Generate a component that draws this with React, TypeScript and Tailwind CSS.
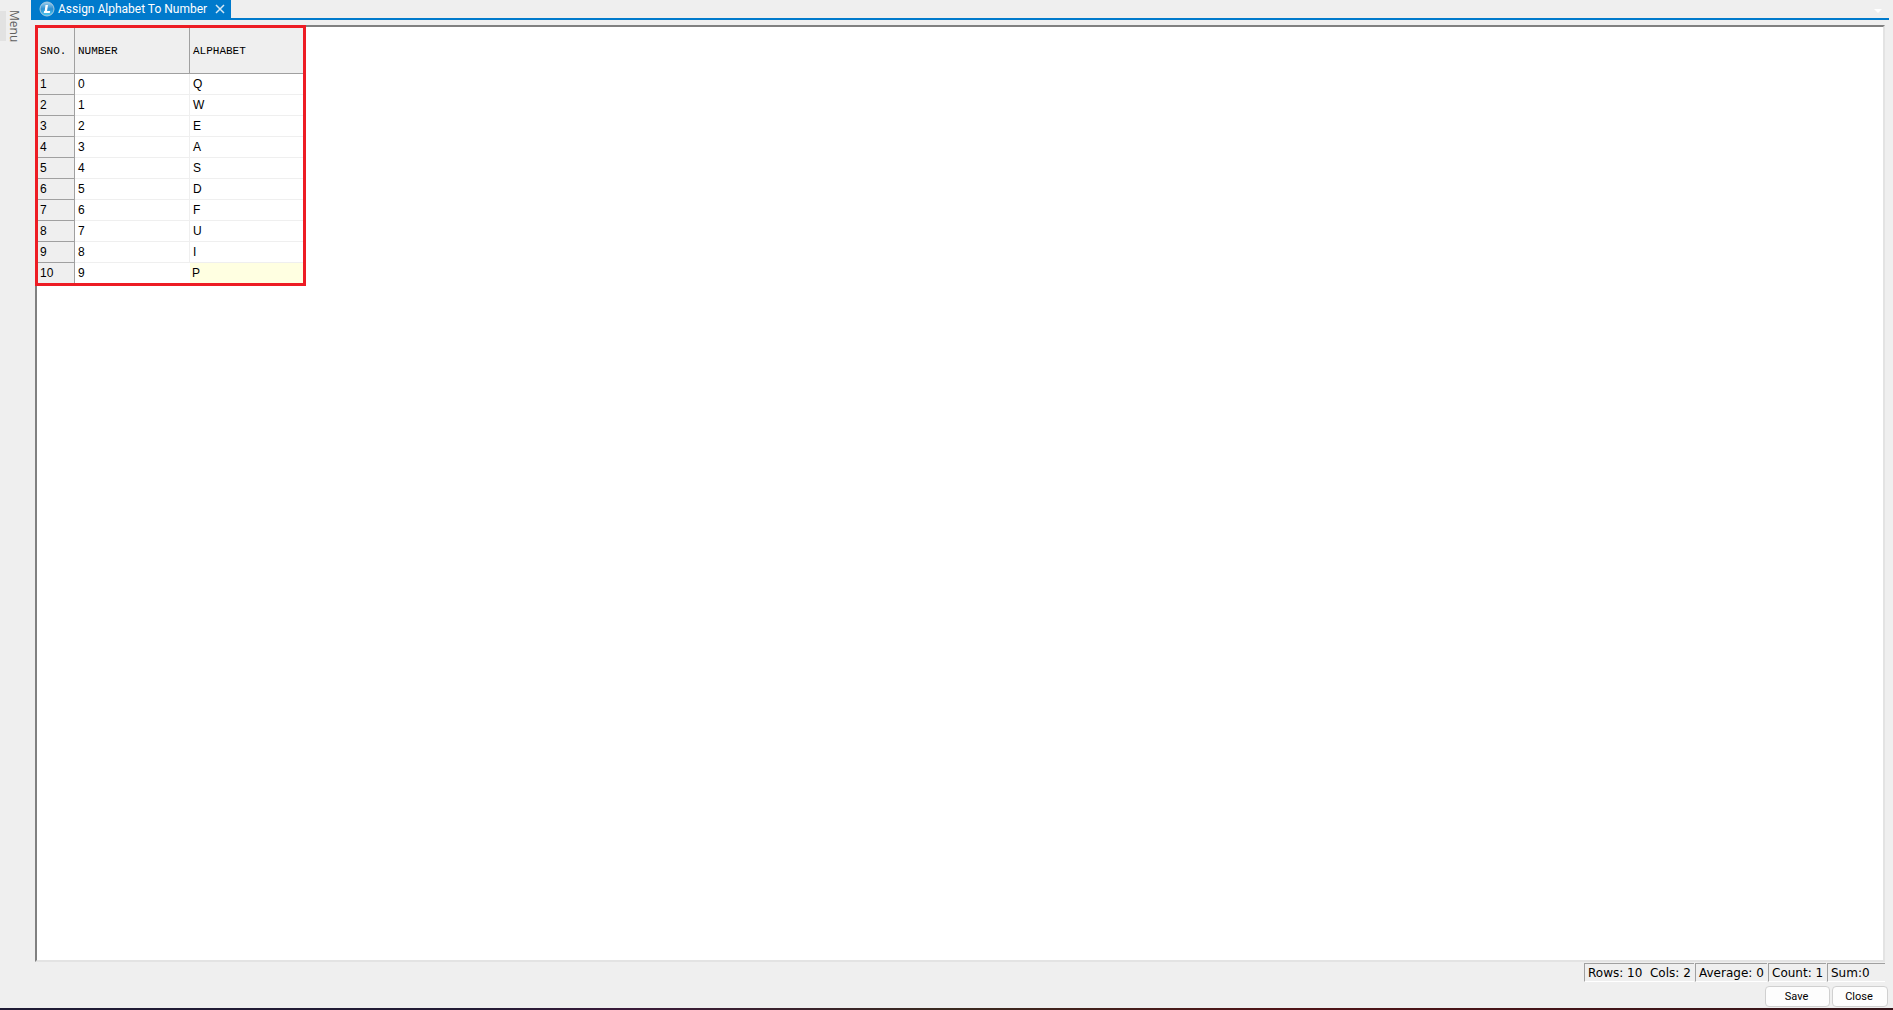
import React from "react";

const rows = ["Q", "W", "E", "A", "S", "D", "F", "U", "I", "P"];

const statusCell =
  "h-[19px] border-l border-t border-b border-l-[#a0a0a0] border-t-[#a0a0a0] border-b-white pl-[3px] leading-[19px] whitespace-pre";

function Logo() {
  return (
    <svg width="16" height="16" viewBox="0 0 16 16" aria-hidden="true">
      <defs>
        <linearGradient id="ball" x1="0" y1="0" x2="0" y2="1">
          <stop offset="0" stopColor="#9fd0ee" />
          <stop offset="0.5" stopColor="#2a8fd2" />
          <stop offset="1" stopColor="#4fd0f5" />
        </linearGradient>
      </defs>
      <circle cx="8" cy="8" r="7" fill="url(#ball)" stroke="#a9c9de" strokeWidth="1" />
      <path d="M6.500 4H9L8 10h3.200l-.4 2H4.800l.3-2h.6z" fill="#fff" />
    </svg>
  );
}

export default function App() {
  return (
    <div className="flex h-screen flex-col bg-[#efefef] font-[Roboto,sans-serif] text-black">
      <div className="flex min-h-0 flex-1">
        <aside className="w-[31px] shrink-0 pt-[11px]">
          <button className="flex h-[30px] items-center text-[12px] leading-[16px] text-[#606060]">
            <span className="h-full w-1.5 bg-[#e2e2e2]" />
            <span className="font-['Open_Sans',sans-serif] [writing-mode:vertical-rl]">Menu</span>
          </button>
        </aside>
        <main className="flex min-w-0 flex-1 flex-col pr-1">
          <header className="flex h-5 shrink-0 justify-between border-b-2 border-[#007acc]">
            <div className="flex h-[18px] w-[200px] items-center bg-[#007acc] pl-2 text-white">
              <Logo />
              <span className="ml-[3px] flex-1 text-[12px] leading-[18px] whitespace-nowrap">Assign Alphabet To Number</span>
              <button aria-label="Close tab" className="mr-1.5">
                <svg width="10" height="10" viewBox="0 0 10 10">
                  <path d="M1 1l8 8M9 1l-8 8" stroke="#d5e8f5" strokeWidth="1.5" />
                </svg>
              </button>
            </div>
            <button aria-label="Open tabs" className="mt-[9px] mr-[7px] self-start">
              <svg width="8" height="4" viewBox="0 0 8 4">
                <path d="M0 0h8L4 4z" fill="#fff" />
              </svg>
            </button>
          </header>
          <section className="mt-[5px] mr-1 ml-1 min-h-0 flex-1 border-2 border-t-[#808080] border-r-[#e3e3e3] border-b-[#e3e3e3] border-l-[#808080] bg-white">
            <div className="-mt-0.5 -ml-0.5 w-[271px] border-3 border-[#ed1c24]">
              <table className="w-full table-fixed border-separate border-spacing-0 text-left">
                <thead className="bg-[#efefef] font-['Liberation_Mono',monospace] text-[11px]">
                  <tr className="h-[46px]">
                    <th className="w-[37px] border-r border-b border-[#a0a0a0] p-0 pt-0.5 pl-0.5 font-normal">SNO.</th>
                    <th className="w-[115px] border-r border-b border-[#a0a0a0] p-0 pt-0.5 pl-[3px] font-normal">NUMBER</th>
                    <th className="border-b border-[#a0a0a0] p-0 pt-0.5 pl-[3px] font-normal">ALPHABET</th>
                  </tr>
                </thead>
                <tbody className="font-['Liberation_Sans',sans-serif] text-[12px] leading-5">
                  {rows.map((letter, i) => {
                    const last = i === rows.length - 1;
                    return (
                      <tr key={letter}>
                        <td className={`border-r border-[#a0a0a0] bg-[#efefef] p-0 pl-0.5 ${last ? "" : "border-b"}`}>{i + 1}</td>
                        <td className={`border-[#efefef] p-0 pl-[3px] ${last ? "" : "border-r border-b"}`}>{i}</td>
                        <td className={`border-[#efefef] p-0 ${last ? "bg-[#ffffe1] pl-0.5" : "border-b pl-[3px]"}`}>{letter}</td>
                      </tr>
                    );
                  })}
                </tbody>
              </table>
            </div>
          </section>
          <footer className="shrink-0 pt-px">
            <div className="mr-1 flex justify-end font-['DejaVu_Sans',sans-serif] text-[12px]">
              <div className={`${statusCell} mr-px w-[110px]`}>{"Rows: 10  Cols: 2"}</div>
              <div className={`${statusCell} mr-px w-[72px]`}>Average: 0</div>
              <div className={`${statusCell} mr-px w-[58px]`}>Count: 1</div>
              <div className={`${statusCell} w-[58px]`}>Sum:0</div>
            </div>
            <div className="mt-1 mr-px mb-px flex justify-end gap-0.5 text-[11px] leading-[20px]">
              <button className="h-[21px] w-[65px] rounded-[4px] border border-[#d0d0d0] bg-[#fdfdfd] pr-0.5">Save</button>
              <button className="h-[21px] w-[56px] rounded-[4px] border border-[#d0d0d0] bg-[#fdfdfd] pr-0.5">Close</button>
            </div>
          </footer>
        </main>
      </div>
      <div className="h-0.5 shrink-0 bg-[linear-gradient(to_right,#1f1b35,#231b35_25%,#3a1a3a_33%,#3a2a20_50%,#501418_68%,#35161b)]" />
    </div>
  );
}
